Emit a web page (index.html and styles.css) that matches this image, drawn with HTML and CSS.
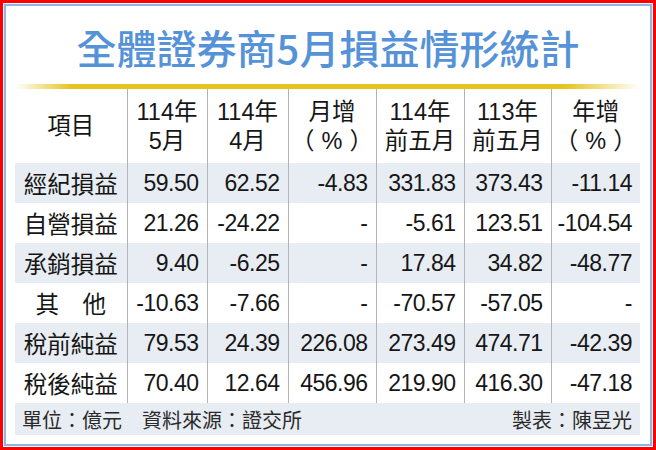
FILE: index.html
```html
<!DOCTYPE html>
<html lang="zh-Hant">
<head>
<meta charset="utf-8">
<link rel="stylesheet" href="styles.css">
</head>
<body>
<div class="frame">
  <div class="inner">
    <h1 class="title">全體證券商5月損益情形統計</h1>
    <div class="bar"></div>
    <table class="stats">
      <colgroup>
        <col class="c-label"><col class="c-a"><col class="c-b"><col class="c-c"><col class="c-d"><col class="c-e"><col class="c-f">
      </colgroup>
      <thead>
        <tr>
          <th>項目</th>
          <th>114年<br>5月</th>
          <th>114年<br>4月</th>
          <th>月增<br><span class="pct"><span class="po">（</span>%<span class="pc">）</span></span></th>
          <th>114年<br>前五月</th>
          <th>113年<br>前五月</th>
          <th>年增<br><span class="pct"><span class="po">（</span>%<span class="pc">）</span></span></th>
        </tr>
      </thead>
      <tbody>
        <tr class="shade"><td class="label">經紀損益</td><td>59.50</td><td>62.52</td><td>-4.83</td><td>331.83</td><td>373.43</td><td>-11.14</td></tr>
        <tr><td class="label">自營損益</td><td>21.26</td><td>-24.22</td><td>-</td><td>-5.61</td><td>123.51</td><td>-104.54</td></tr>
        <tr class="shade"><td class="label">承銷損益</td><td>9.40</td><td>-6.25</td><td>-</td><td>17.84</td><td>34.82</td><td>-48.77</td></tr>
        <tr><td class="label">其　他</td><td>-10.63</td><td>-7.66</td><td>-</td><td>-70.57</td><td>-57.05</td><td>-</td></tr>
        <tr class="shade"><td class="label">稅前純益</td><td>79.53</td><td>24.39</td><td>226.08</td><td>273.49</td><td>474.71</td><td>-42.39</td></tr>
        <tr><td class="label">稅後純益</td><td>70.40</td><td>12.64</td><td>456.96</td><td>219.90</td><td>416.30</td><td>-47.18</td></tr>
      </tbody>
    </table>
    <div class="footer">
      <span>單位：億元　資料來源：證交所</span>
      <span>製表：陳昱光</span>
    </div>
  </div>
</div>
</body>
</html>
```

FILE: styles.css
```css
html, body {
  margin: 0;
  padding: 0;
  background: #ffffff;
}

.frame {
  width: 656px;
  height: 450px;
  box-sizing: border-box;
  border: 3px solid #ff0000;
  padding: 1px;
}

.inner {
  height: 100%;
  box-sizing: border-box;
  border: 2px solid #8db6e6;
  background: #ffffff;
}

.title {
  margin: 0;
  height: 78px;
  box-sizing: border-box;
  padding-top: 3px;
  display: flex;
  align-items: center;
  justify-content: center;
  font-family: "Noto Sans CJK TC", "Noto Sans", sans-serif;
  font-weight: 500;
  font-size: 40px;
  color: #5592d8;
}

.bar {
  height: 5px;
  margin: 0 10px 0 9px;
  background: linear-gradient(to right, rgba(230, 196, 30, 0) 0%, #e6c41e 9%, #e6c41e 88%, rgba(230, 196, 30, 0) 100%);
}

.stats {
  margin-left: 9px;
  width: 625px;
  table-layout: fixed;
  border-collapse: collapse;
  font-family: "Liberation Sans", "Noto Sans CJK TC", sans-serif;
  color: #161616;
}

.c-label { width: 112px; }
.c-a { width: 80px; }
.c-b { width: 81px; }
.c-c { width: 88px; }
.c-d { width: 88px; }
.c-e { width: 87px; }
.c-f { width: 89px; }

.stats th,
.stats td {
  padding: 0;
  border-left: 1px solid #b4b4b4;
}

.stats th:first-child,
.stats td:first-child {
  border-left: none;
}

.stats th {
  height: 73px;
  font-weight: normal;
  font-size: 23.5px;
  line-height: 29px;
  text-align: center;
  vertical-align: middle;
  padding-top: 1px;
}

.pct {
  white-space: nowrap;
}

.po {
  margin-right: 7px;
}

.pc {
  margin-left: 7px;
}

.stats td {
  height: 40px;
  font-size: 23px;
  letter-spacing: -0.5px;
  text-align: right;
  padding-right: 8px;
  vertical-align: middle;
}

.stats td.label {
  font-family: "Noto Sans CJK TC", sans-serif;
  text-align: center;
  padding-right: 0;
  letter-spacing: 0;
  font-size: 23.5px;
}

.stats tr.shade td {
  background: #e8edf3;
}

.footer {
  margin: 0 10px 0 9px;
  height: 32px;
  background: #e8edf3;
  display: flex;
  align-items: center;
  justify-content: space-between;
  padding: 0 8px 0 7px;
  font-family: "Noto Sans CJK TC", sans-serif;
  font-size: 20px;
  color: #2a2a2a;
}
```
